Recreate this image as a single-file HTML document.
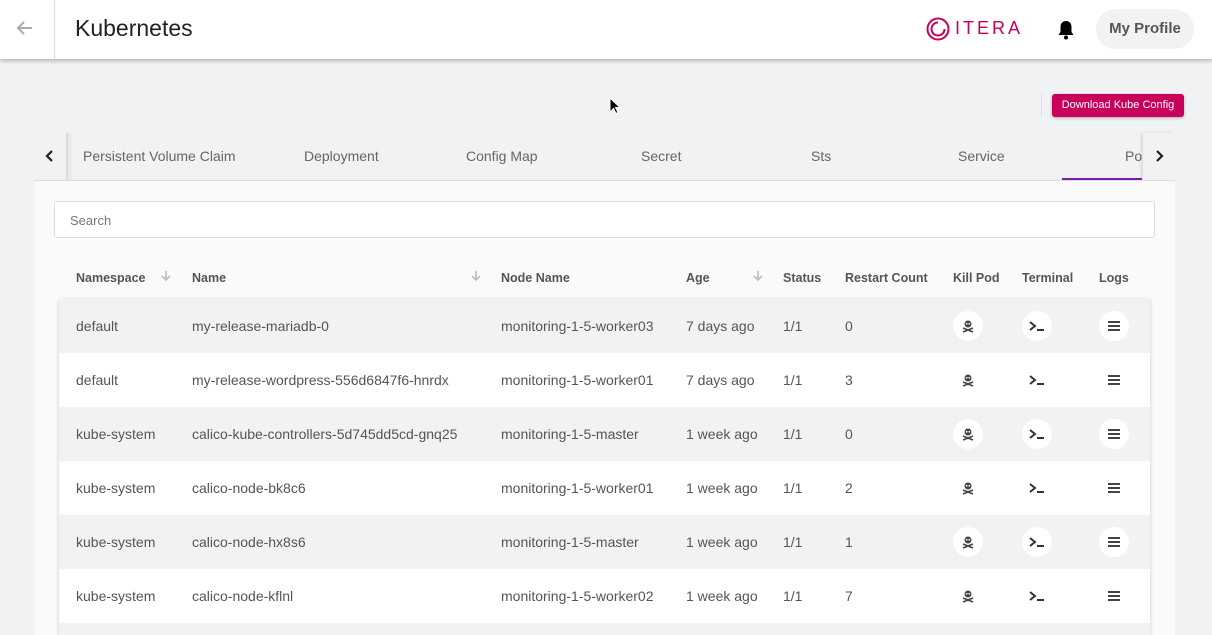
<!DOCTYPE html>
<html style="width:1212px;height:635px;overflow:hidden"><head><style>
*{box-sizing:border-box;margin:0;padding:0}
body{width:1212px;height:635px;overflow:hidden;background:#f1f2f4;font-family:"Liberation Sans",sans-serif;position:relative;color:#555}
.hdr{position:absolute;left:0;top:0;width:1212px;height:59px;background:#fff;box-shadow:0 2px 4px rgba(0,0,0,.25);z-index:2}
.abs{position:absolute}
.tab{position:absolute;top:148px;font-size:14px;color:#666}
.card{position:absolute;left:34px;top:180px;width:1141px;height:455px;background:#fafaf9;border-top:1px solid #ddd}
.th{position:absolute;top:271px;font-size:12.5px;font-weight:bold;color:#555}
.sa{position:absolute;top:270px}
.row{position:absolute;left:59px;width:1091px;height:54px;font-size:14px;color:#555}
.row span{position:absolute;top:19px}
.row.g{background:#f3f2f1}
.row.w{background:#fff}
.ic{position:absolute;top:12px;width:30px;height:30px;border-radius:50%;display:flex;align-items:center;justify-content:center}
.g .ic{background:#fff}
</style></head><body>
<div class="hdr">
 <svg class="abs" style="left:15px;top:20px" width="18" height="16" viewBox="0 0 18 16"><path d="M17 8H3M9 2L3 8l6 6" fill="none" stroke="#aaa" stroke-width="2"/></svg>
 <div class="abs" style="left:54px;top:0;width:1px;height:59px;background:#ddd"></div>
 <div class="abs" style="left:75px;top:15px;font-size:23px;color:#222">Kubernetes</div>
 <svg class="abs" style="left:926px;top:17px" width="24" height="24" viewBox="0 0 24 24"><circle cx="12" cy="12" r="10.5" fill="none" stroke="#c8005a" stroke-width="2"/><path d="M12 5.5a6.5 6.5 0 1 0 6.5 6.5" fill="none" stroke="#c8005a" stroke-width="2"/></svg>
 <div class="abs" style="left:955px;top:18px;font-size:18px;letter-spacing:3px;color:#c8005a">ITERA</div>
 <svg class="abs" style="left:1057px;top:20px" width="18" height="20" viewBox="0 0 18 20"><path d="M9 1c-3.5 0-5.5 2.5-5.5 6v5L1.5 15h15l-2-3V7C14.5 3.5 12.5 1 9 1z" fill="#000"/><circle cx="9" cy="17.5" r="2" fill="#000"/></svg>
 <div class="abs" style="left:1096px;top:9px;width:98px;height:40px;border-radius:20px;background:#f1f2f4;font-size:15px;color:#555;text-align:center;line-height:40px;font-weight:bold">My Profile</div>
</div>
<div class="abs" style="left:1041px;top:94px;width:1px;height:23px;background:#ddd"></div>
<div class="abs" style="left:1052px;top:94px;width:132px;height:23px;background:#c8005a;color:#fff;font-size:11px;border-radius:3px;text-align:center;line-height:23px;box-shadow:0 1px 3px rgba(0,0,0,.3)">Download Kube Config</div>
<svg class="abs" style="left:609px;top:97px" width="12" height="18" viewBox="0 0 12 18"><path d="M1 1v14l3.5-3.5 2.5 5 2-1-2.5-5H11z" fill="#000" stroke="#fff" stroke-width="1"/></svg>
<svg class="abs" style="left:45px;top:150px" width="10" height="12" viewBox="0 0 10 12"><path d="M7 1L2 6l5 5" fill="none" stroke="#222" stroke-width="2.2"/></svg>
<div class="abs" style="left:66px;top:133px;width:2px;height:47px;background:#ddd;box-shadow:2px 0 3px rgba(0,0,0,.1)"></div>
<div class="tab" style="left:83px">Persistent Volume Claim</div>
<div class="tab" style="left:304px">Deployment</div>
<div class="tab" style="left:466px">Config Map</div>
<div class="tab" style="left:641px">Secret</div>
<div class="tab" style="left:811px">Sts</div>
<div class="tab" style="left:958px">Service</div>
<div class="tab" style="left:1125px">Po</div>
<div class="abs" style="left:1062px;top:178px;width:80px;height:2px;background:#7b1fa2"></div>
<div class="abs" style="left:1143px;top:133px;width:32px;height:47px;background:#f1f2f4;box-shadow:-2px 0 3px rgba(0,0,0,.1)"></div>
<svg class="abs" style="left:1154px;top:150px" width="10" height="12" viewBox="0 0 10 12"><path d="M3 1l5 5-5 5" fill="none" stroke="#222" stroke-width="2.2"/></svg>
<div class="card"></div>
<div class="abs" style="left:54px;top:201px;width:1101px;height:37px;background:#fff;border:1px solid #ddd;border-radius:3px;font-size:13px;color:#777;padding:11px 15px">Search</div>
<svg width="0" height="0" style="position:absolute"><defs><symbol id="da" viewBox="0 0 12 12"><path d="M6 1v9M2 6l4 4 4-4" fill="none" stroke="#bbb" stroke-width="1.6"/></symbol></defs></svg>
<div class="th" style="left:76px">Namespace</div><svg class="sa" style="left:160px" width="12" height="12"><use href="#da"/></svg>
<div class="th" style="left:192px">Name</div><svg class="sa" style="left:470px" width="12" height="12"><use href="#da"/></svg>
<div class="th" style="left:501px">Node Name</div>
<div class="th" style="left:686px">Age</div><svg class="sa" style="left:752px" width="12" height="12"><use href="#da"/></svg>
<div class="th" style="left:783px">Status</div>
<div class="th" style="left:845px">Restart Count</div>
<div class="th" style="left:953px">Kill Pod</div>
<div class="th" style="left:1022px">Terminal</div>
<div class="th" style="left:1099px">Logs</div>
<div class="abs" style="left:59px;top:299px;width:1091px;height:336px;box-shadow:0 1px 4px rgba(0,0,0,.2)"></div>
<div id="rows"></div>
<script>
var d=[["default","my-release-mariadb-0","monitoring-1-5-worker03","7 days ago","0"],
["default","my-release-wordpress-556d6847f6-hnrdx","monitoring-1-5-worker01","7 days ago","3"],
["kube-system","calico-kube-controllers-5d745dd5cd-gnq25","monitoring-1-5-master","1 week ago","0"],
["kube-system","calico-node-bk8c6","monitoring-1-5-worker01","1 week ago","2"],
["kube-system","calico-node-hx8s6","monitoring-1-5-master","1 week ago","1"],
["kube-system","calico-node-kflnl","monitoring-1-5-worker02","1 week ago","7"]];
var skull='<svg width="14" height="14" viewBox="0 0 14 14"><circle cx="7" cy="5" r="3.5" fill="#444"/><circle cx="5.7" cy="4.8" r="0.9" fill="#fff"/><circle cx="8.3" cy="4.8" r="0.9" fill="#fff"/><path d="M2 9l10 4M12 9L2 13" stroke="#444" stroke-width="1.6"/></svg>';
var term='<svg width="18" height="14" viewBox="0 0 18 14"><path d="M2 3l5 4-5 4" fill="none" stroke="#333" stroke-width="2"/><path d="M9 11h7" stroke="#333" stroke-width="2"/></svg>';
var logs='<svg width="14" height="12" viewBox="0 0 14 12"><path d="M1 2h12M1 6h12M1 10h12" stroke="#444" stroke-width="2"/></svg>';
var h='';
d.forEach(function(r,i){h+='<div class="row '+(i%2?'w':'g')+'" style="top:'+(299+i*54)+'px"><span style="left:17px">'+r[0]+'</span><span style="left:133px">'+r[1]+'</span><span style="left:442px">'+r[2]+'</span><span style="left:627px">'+r[3]+'</span><span style="left:724px">1/1</span><span style="left:786px">'+r[4]+'</span><div class="ic" style="left:894px">'+skull+'</div><div class="ic" style="left:963px">'+term+'</div><div class="ic" style="left:1040px">'+logs+'</div></div>';});
h+='<div class="row g" style="top:623px;height:12px"></div>';
document.getElementById('rows').innerHTML=h;
</script>
</body></html>
